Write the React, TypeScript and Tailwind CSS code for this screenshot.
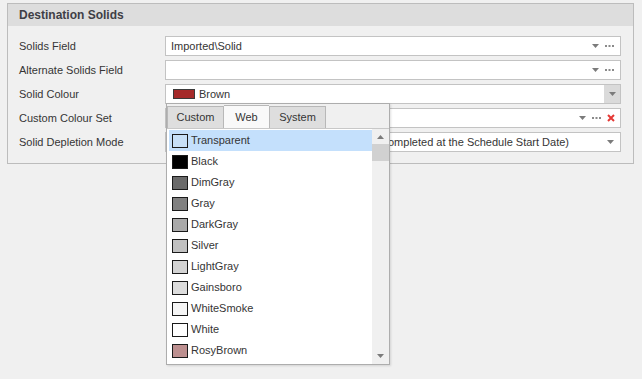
import React from "react";

const font = { fontFamily: '"Liberation Sans", Arial, sans-serif' };

function Arrow({ className = "" }: { className?: string }) {
  return (
    <svg width="7" height="4" viewBox="0 0 7 4" className={className}>
      <path d="M0 0h7L3.5 4z" fill="#7b7b7b" />
    </svg>
  );
}

function Dots() {
  return (
    <svg width="9" height="2" viewBox="0 0 9 2">
      <rect x="0" y="0" width="2" height="2" fill="#8a8a8a" />
      <rect x="3.5" y="0" width="2" height="2" fill="#8a8a8a" />
      <rect x="7" y="0" width="2" height="2" fill="#8a8a8a" />
    </svg>
  );
}

function RedX() {
  return (
    <svg width="8" height="8" viewBox="0 0 8 8">
      <path d="M1 1l6 6M7 1L1 7" stroke="#e53935" strokeWidth="2" />
    </svg>
  );
}

const colours = [
  { name: "Transparent", fill: "#c7e0f8" },
  { name: "Black", fill: "#000000" },
  { name: "DimGray", fill: "#696969" },
  { name: "Gray", fill: "#808080" },
  { name: "DarkGray", fill: "#a9a9a9" },
  { name: "Silver", fill: "#c0c0c0" },
  { name: "LightGray", fill: "#d3d3d3" },
  { name: "Gainsboro", fill: "#dcdcdc" },
  { name: "WhiteSmoke", fill: "#f5f5f5" },
  { name: "White", fill: "#ffffff" },
  { name: "RosyBrown", fill: "#bc8f8f" },
];

function Field({ children, right }: { children?: React.ReactNode; right?: React.ReactNode }) {
  return (
    <div className="flex h-[20px] w-[456px] items-center overflow-hidden border border-[#c3c3c3] bg-white">
      <div className="flex-1 overflow-hidden pl-[5px] whitespace-nowrap">{children}</div>
      <div className="flex h-full items-center">{right}</div>
    </div>
  );
}

export default function App() {
  return (
    <div className="relative h-[379px] w-[642px] bg-[#f0f0f0] text-[11px] text-[#353535]" style={font}>
      <div className="pl-[7px] pt-[3px]">
        <div className="w-[627px] border border-[#bcbcbc] bg-[#f0f0f0]">
          <div className="flex h-[22px] items-center bg-[#dddddd] pl-[11px] text-[12px] font-bold text-[#3f3f46]">
            Destination Solids
          </div>
          <div className="flex flex-col gap-[4px] pb-[11px] pl-[11px] pr-[12px] pt-[10px]">
            <div className="flex items-center justify-between">
              <span>Solids Field</span>
              <Field
                right={
                  <div className="flex items-center gap-[6px] pr-[6px]">
                    <Arrow />
                    <Dots />
                  </div>
                }
              >
                Imported\Solid
              </Field>
            </div>
            <div className="flex items-center justify-between">
              <span>Alternate Solids Field</span>
              <Field
                right={
                  <div className="flex items-center gap-[6px] pr-[6px]">
                    <Arrow />
                    <Dots />
                  </div>
                }
              />
            </div>
            <div className="flex items-center justify-between">
              <span>Solid Colour</span>
              <Field
                right={
                  <div className="flex h-full w-[16px] items-center justify-center bg-[#dadada]">
                    <Arrow />
                  </div>
                }
              >
                <div className="flex items-center gap-[4px] pl-[2px]">
                  <span className="inline-block h-[10px] w-[22px] border border-[#3a3a3a] bg-[#a52a2a]" />
                  <span>Brown</span>
                </div>
              </Field>
            </div>
            <div className="flex items-center justify-between">
              <span>Custom Colour Set</span>
              <Field
                right={
                  <div className="flex items-center gap-[6px] pr-[5px]">
                    <Arrow />
                    <Dots />
                    <RedX />
                  </div>
                }
              />
            </div>
            <div className="flex items-center justify-between">
              <span>Solid Depletion Mode</span>
              <Field
                right={
                  <div className="flex items-center pr-[6px]">
                    <Arrow />
                  </div>
                }
              >
                <div className="flex w-[398px] justify-end overflow-hidden whitespace-nowrap">
                  <span className="shrink-0">Depleted Over the Schedule Period (Completed at the Schedule Start Date)</span>
                </div>
              </Field>
            </div>
          </div>
        </div>
      </div>

      {/* Colour popup */}
      <div className="absolute left-[166px] top-[103px] flex h-[262px] w-[224px] flex-col border border-[#adadad] bg-[#f0f0f0] shadow-[1px_1px_2px_rgba(0,0,0,0.12)]">
        <div className="flex h-[24px] items-end">
          <div className="flex h-[22px] w-[57px] items-center justify-center border border-b-0 border-[#b8b8b8] bg-[#dedede]">
            Custom
          </div>
          <div className="flex h-[23px] w-[45px] items-center justify-center border-t border-[#b8b8b8] bg-[#f9f9f9]">
            Web
          </div>
          <div className="flex h-[22px] w-[57px] items-center justify-center border border-b-0 border-[#b8b8b8] bg-[#dedede]">
            System
          </div>
        </div>
        <div className="flex flex-1 border-t border-[#c8c8c8]">
          <div className="flex-1 bg-white pl-[2px] pt-[1px]">
            {colours.map((c, i) => (
              <div
                key={c.name}
                className={`flex h-[21px] items-center gap-[3px] pl-[3px] ${i === 0 ? "bg-[#c4e0fc]" : ""}`}
              >
                <span
                  className="inline-block h-[14px] w-[16px] border border-[#1a1a1a]"
                  style={{ backgroundColor: c.fill }}
                />
                <span>{c.name}</span>
              </div>
            ))}
          </div>
          <div className="flex w-[17px] flex-col items-center bg-[#f0f0f0]">
            <svg width="7" height="4" viewBox="0 0 7 4" className="mt-[6px]">
              <path d="M3.5 0L7 4H0z" fill="#7b7b7b" />
            </svg>
            <div className="mt-[5px] h-[17px] w-full bg-[#d1d1d1]" />
            <div className="flex-1" />
            <Arrow className="mb-[6px]" />
          </div>
        </div>
      </div>
    </div>
  );
}
